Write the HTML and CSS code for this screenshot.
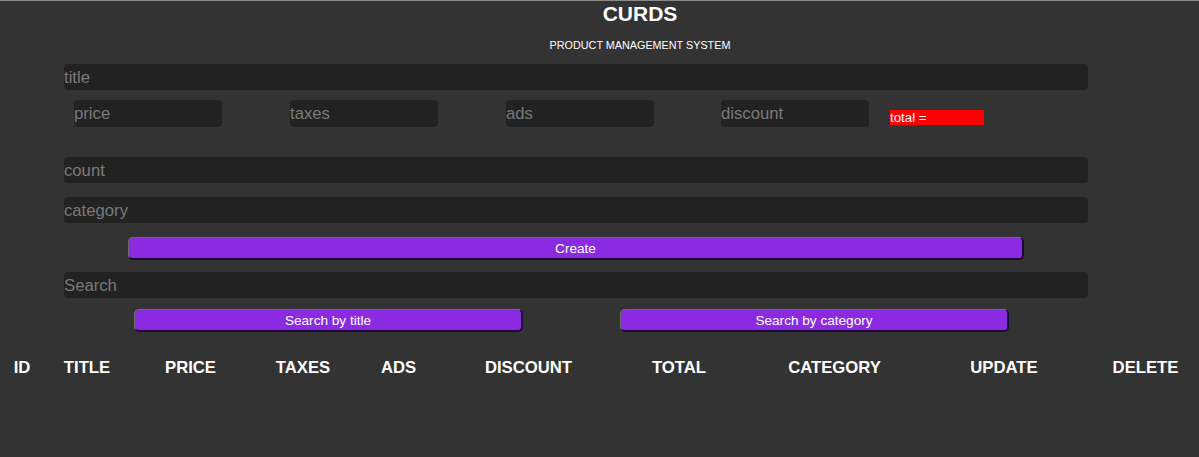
FILE: index.html
```html
<!DOCTYPE html>
<html lang="en">
<head>
<meta charset="utf-8">
<title>CURDS</title>
<link rel="stylesheet" href="styles.css">
</head>
<body>
<div class="crud">
  <header class="head">
    <h2 class="brand">CURDS</h2>
    <p class="subtitle">PRODUCT MANAGEMENT SYSTEM</p>
  </header>
  <div class="inputs">
    <input class="field" type="text" placeholder="title">
    <div class="price-row">
      <input class="field small" type="number" placeholder="price">
      <input class="field small" type="number" placeholder="taxes">
      <input class="field small" type="number" placeholder="ads">
      <input class="field small" type="number" placeholder="discount">
      <small class="total">total =</small>
    </div>
    <input class="field count" type="number" placeholder="count">
    <input class="field gap14" type="text" placeholder="category">
    <button class="btn create">Create</button>
  </div>
  <div class="search-block">
    <input class="field" type="text" placeholder="Search">
    <div class="btn-search">
      <button class="btn half">Search by title</button>
      <button class="btn half">Search by category</button>
    </div>
  </div>
  <div class="outputs">
    <table class="tbl">
      <colgroup>
        <col class="c1"><col class="c2"><col class="c3"><col class="c4"><col class="c5">
        <col class="c6"><col class="c7"><col class="c8"><col class="c9"><col class="c10">
      </colgroup>
      <thead>
        <tr>
          <th>ID</th><th>TITLE</th><th>PRICE</th><th>TAXES</th><th>ADS</th>
          <th>DISCOUNT</th><th>TOTAL</th><th>CATEGORY</th><th>UPDATE</th><th>DELETE</th>
        </tr>
      </thead>
      <tbody></tbody>
    </table>
  </div>
</div>
</body>
</html>
```
FILE: styles.css
```css
html, body {
  overflow-x: hidden;
}
body {
  margin: 0;
  background: #333333;
  border-top: 1px solid #8a8a8a;
  color: #ffffff;
  font-family: "Liberation Sans", Arial, sans-serif;
  height: 456px;
}
.head {
  padding-left: 81px;
  text-align: center;
}
.brand {
  margin: 0;
  font-size: 21px;
  line-height: 26px;
  font-weight: bold;
}
.subtitle {
  margin: 11px 0 0;
  font-size: 10.8px;
  line-height: 14px;
}
.inputs, .search-block {
  margin-left: 64px;
  width: 1024px;
}
.inputs {
  margin-top: 12px;
}
.field {
  display: block;
  box-sizing: border-box;
  width: 100%;
  height: 26px;
  margin: 0;
  padding: 1px 0 0;
  border: none;
  border-radius: 4px;
  background: #222222;
  color: #ffffff;
  font-family: "Liberation Sans", Arial, sans-serif;
  font-size: 16.7px;
  outline: none;
}
.field::placeholder {
  color: #7a7a7a;
}
.price-row {
  display: flex;
  align-items: flex-end;
  margin-top: 10px;
  padding-left: 10px;
  gap: 68px;
}
.field.small {
  width: 148px;
  height: 27px;
  flex: none;
}
.field.small:nth-child(4) {
  margin-left: -1px;
}
.total {
  display: inline-block;
  width: 94px;
  height: 15px;
  margin-left: -47px;
  margin-bottom: 2px;
  background: #ff0000;
  color: #ffffff;
  font-size: 13.3px;
  line-height: 15px;
}
.count {
  margin-top: 30px;
}
.gap14 {
  margin-top: 14px;
}
.btn {
  display: block;
  box-sizing: border-box;
  height: 23px;
  padding: 0;
  background: #8a2be2;
  color: #ffffff;
  font-family: "Liberation Sans", Arial, sans-serif;
  font-size: 13.6px;
  border-style: solid;
  border-width: 1px 2px 2px 1px;
  border-color: #6c6c6c #1e0838 #1e0838 #6c6c6c;
  border-radius: 5px;
  cursor: pointer;
}
.create {
  width: 896px;
  margin: 14px 0 0 64px;
}
.search-block {
  margin-top: 12px;
}
.btn-search {
  display: flex;
  gap: 97px;
  margin: 11px 0 0 70px;
}
.half {
  width: 389px;
}
.outputs {
  margin-top: 21px;
}
.tbl {
  table-layout: fixed;
  width: 1209px;
  border-collapse: collapse;
}
.tbl th {
  padding: 0;
  height: 30px;
  text-align: center;
  font-size: 16.7px;
  font-weight: bold;
  text-transform: uppercase;
}
.c1 { width: 44px; }
.c2 { width: 86px; }
.c3 { width: 121px; }
.c4 { width: 104px; }
.c5 { width: 87px; }
.c6 { width: 173px; }
.c7 { width: 128px; }
.c8 { width: 183px; }
.c9 { width: 156px; }
.c10 { width: 127px; }
```
